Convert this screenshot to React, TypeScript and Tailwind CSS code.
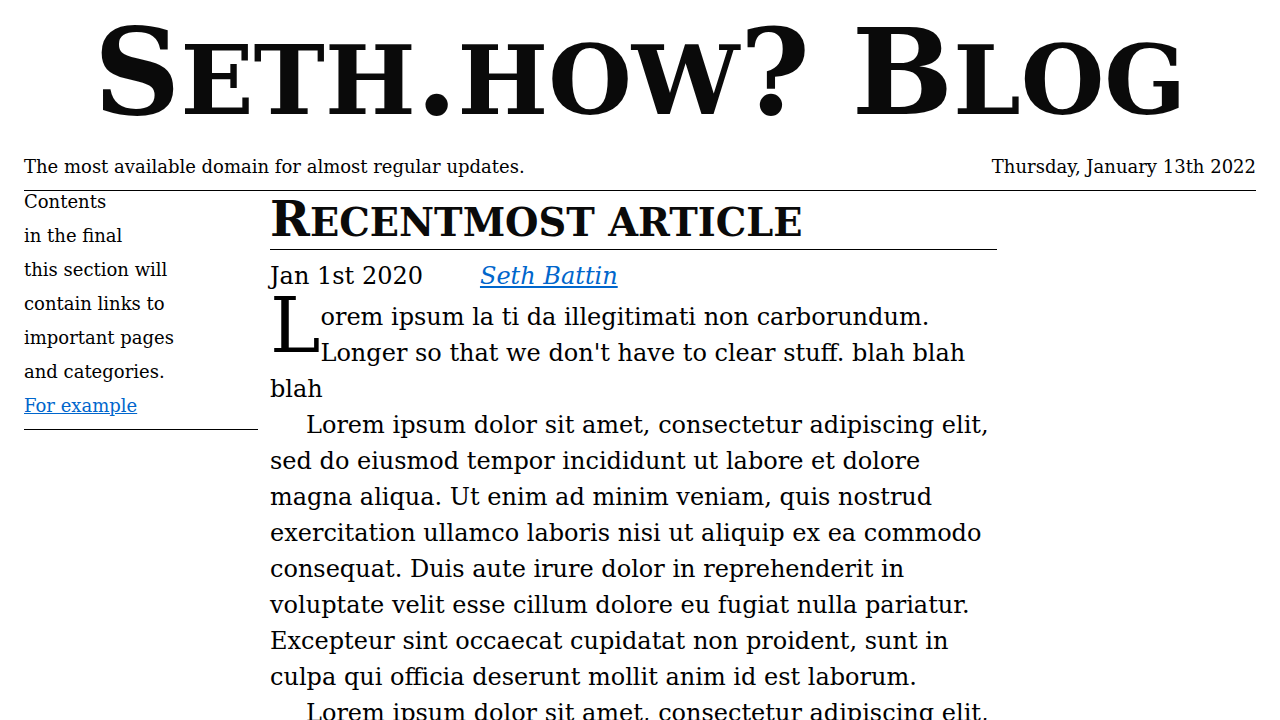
function Small({ children }: { children: string }) {
  return <span className="text-[0.8em] leading-none uppercase">{children}</span>;
}

export default function App() {
  return (
    <div className="min-h-screen bg-white text-black px-6 font-['DejaVu_Serif',serif]">
      <h1 className="text-center text-[120px] font-bold leading-[140px] pt-[2px] text-[#0a0a0a]">
        S<Small>eth</Small>.<Small>how</Small>? B<Small>log</Small>
      </h1>
      <div className="flex justify-between items-end border-b border-black mt-[13px] pb-[11px] text-[18px] leading-[24px]">
        <span>The most available domain for almost regular updates.</span>
        <span>Thursday, January 13th 2022</span>
      </div>
      <div className="flex gap-3">
        <nav className="w-[234px] shrink-0 text-[18px] leading-[34px] border-b border-black pb-[6px] self-start">
          <p className="-mt-[6px]">Contents</p>
          <p>in the final</p>
          <p>this section will</p>
          <p>contain links to</p>
          <p>important pages</p>
          <p>and categories.</p>
          <p>
            <a href="#" className="text-[#0066cc] underline">For example</a>
          </p>
        </nav>
        <main className="w-[727px]">
          <h2 className="text-[48px] font-bold leading-[52px] pt-[2px] pb-[4px] border-b border-black text-[#0a0a0a]">
            R<Small>ecentmost article</Small>
          </h2>
          <div className="flex gap-[57px] text-[24px] leading-[36px] mt-[8px]">
            <span>Jan 1st 2020</span>
            <a href="#" className="italic text-[#0066cc] underline">Seth Battin</a>
          </div>
          <div className="text-[24px] leading-[36px] mt-[5px]">
            <p>
              <span className="float-left text-[76px] leading-[64px] -mt-[5px]">L</span>
              orem ipsum la ti da illegitimati non carborundum. Longer so that we don't have to clear stuff. blah blah blah
            </p>
            <p className="indent-[36px]">
              Lorem ipsum dolor sit amet, consectetur adipiscing elit, sed do eiusmod tempor incididunt ut labore et dolore magna aliqua. Ut enim ad minim veniam, quis nostrud exercitation ullamco laboris nisi ut aliquip ex ea commodo consequat. Duis aute irure dolor in reprehenderit in voluptate velit esse cillum dolore eu fugiat nulla pariatur. Excepteur sint occaecat cupidatat non proident, sunt in culpa qui officia deserunt mollit anim id est laborum.
            </p>
            <p className="indent-[36px]">
              Lorem ipsum dolor sit amet, consectetur adipiscing elit, sed do eiusmod tempor incididunt ut labore et dolore magna aliqua. Ut enim ad minim veniam, quis nostrud exercitation ullamco laboris nisi ut aliquip ex ea commodo consequat.
            </p>
          </div>
        </main>
      </div>
    </div>
  );
}
